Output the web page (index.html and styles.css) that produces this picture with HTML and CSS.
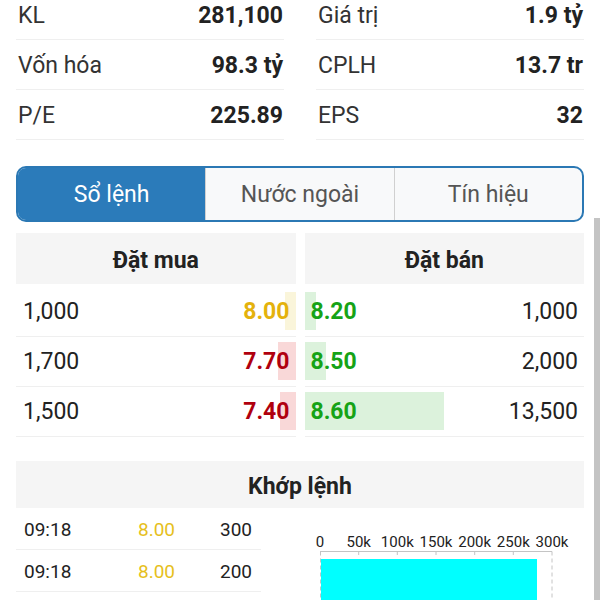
FILE: index.html
```html
<!DOCTYPE html>
<html lang="vi">
<head>
    <meta charset="UTF-8">
    <meta name="viewport" content="width=device-width, initial-scale=1.0">
    <title>Chi tiết cổ phiếu</title>
    <link rel="stylesheet" href="styles.css">
</head>
<body>
    <div class="page">
        <div class="stats">
            <div class="stat-col">
                <div class="stat-row"><span class="label">KL</span><span class="value">281,100</span></div>
                <div class="stat-row"><span class="label">Vốn hóa</span><span class="value">98.3 tỷ</span></div>
                <div class="stat-row"><span class="label">P/E</span><span class="value">225.89</span></div>
            </div>
            <div class="stat-col">
                <div class="stat-row"><span class="label">Giá trị</span><span class="value">1.9 tỷ</span></div>
                <div class="stat-row"><span class="label">CPLH</span><span class="value">13.7 tr</span></div>
                <div class="stat-row"><span class="label">EPS</span><span class="value">32</span></div>
            </div>
        </div>

        <div class="tabs">
            <div class="tab active">Sổ lệnh</div>
            <div class="tab">Nước ngoài</div>
            <div class="tab">Tín hiệu</div>
        </div>

        <div class="orderbook">
            <div class="side buy">
                <div class="side-head">Đặt mua</div>
                <div class="ob-rows">
                    <div class="ob-row">
                        <span class="qty">1,000</span>
                        <span class="price ref"><i class="bar" style="width: 11px"></i>8.00</span>
                    </div>
                    <div class="ob-row">
                        <span class="qty">1,700</span>
                        <span class="price down"><i class="bar" style="width: 18px"></i>7.70</span>
                    </div>
                    <div class="ob-row">
                        <span class="qty">1,500</span>
                        <span class="price down"><i class="bar" style="width: 16px"></i>7.40</span>
                    </div>
                </div>
            </div>
            <div class="side sell">
                <div class="side-head">Đặt bán</div>
                <div class="ob-rows">
                    <div class="ob-row">
                        <i class="bar" style="width: 11px"></i>
                        <span class="price up">8.20</span>
                        <span class="qty">1,000</span>
                    </div>
                    <div class="ob-row">
                        <i class="bar" style="width: 21px"></i>
                        <span class="price up">8.50</span>
                        <span class="qty">2,000</span>
                    </div>
                    <div class="ob-row">
                        <i class="bar" style="width: 139px"></i>
                        <span class="price up">8.60</span>
                        <span class="qty">13,500</span>
                    </div>
                </div>
            </div>
        </div>

        <div class="match">
            <div class="match-head">Khớp lệnh</div>
            <div class="match-body">
                <div class="ticks">
                    <div class="tick-row"><span class="t-time">09:18</span><span class="t-price">8.00</span><span class="t-vol">300</span></div>
                    <div class="tick-row"><span class="t-time">09:18</span><span class="t-price">8.00</span><span class="t-vol">200</span></div>
                </div>
                <svg class="chart" width="323" height="92" viewBox="0 0 323 92">
                    <g class="axis-labels">
                        <text x="59" y="38.5">0</text>
                        <text x="97.7" y="38.5">50k</text>
                        <text x="136.3" y="38.5">100k</text>
                        <text x="175" y="38.5">150k</text>
                        <text x="213.7" y="38.5">200k</text>
                        <text x="252.3" y="38.5">250k</text>
                        <text x="291" y="38.5">300k</text>
                    </g>
                    <line x1="59" y1="43.5" x2="291" y2="43.5" stroke="#c4c4c4" stroke-width="1"/>
                    <g stroke="#c4c4c4" stroke-width="1">
                        <line x1="97.7" y1="43.5" x2="97.7" y2="47"/>
                        <line x1="136.3" y1="43.5" x2="136.3" y2="47"/>
                        <line x1="175" y1="43.5" x2="175" y2="47"/>
                        <line x1="213.7" y1="43.5" x2="213.7" y2="47"/>
                        <line x1="252.3" y1="43.5" x2="252.3" y2="47"/>
                    </g>
                    <g stroke="#c4c4c4" stroke-width="1" stroke-dasharray="4 3">
                        <line x1="59.5" y1="43.5" x2="59.5" y2="92"/>
                        <line x1="291" y1="43.5" x2="291" y2="92"/>
                    </g>
                    <rect x="60" y="51" width="216" height="41" fill="#00ffff"/>
                </svg>
            </div>
        </div>
    </div>
    <div class="scrollbar"></div>
</body>
</html>
```

FILE: styles.css
```css
body {
    margin: 0;
    font-family: Roboto, 'Noto Sans', sans-serif;
    font-variant-numeric: tabular-nums;
    color: #222;
    background: #fff;
    overflow: hidden;
}
.page {
    padding: 0 16px;
    margin-top: -10px;
}
.stats {
    display: grid;
    grid-template-columns: 1fr 1fr;
    column-gap: 32px;
}
.stat-row {
    height: 47px;
    padding: 2px 1px 0 2px;
    border-bottom: 1px solid #efefef;
    display: flex;
    align-items: center;
    justify-content: space-between;
    font-size: 23px;
}
.label {
    color: #333;
}
.value {
    font-weight: bold;
    color: #222;
}
.tabs {
    margin-top: 26px;
    display: flex;
    height: 52px;
    border: 2px solid #2b78b4;
    border-radius: 10px;
    overflow: hidden;
    background: #f8f9fa;
}
.tab {
    flex: 1;
    display: flex;
    align-items: center;
    justify-content: center;
    font-size: 23px;
    color: #555;
    border-left: 1px solid #d0d0d0;
}
.tab:first-child {
    border-left: none;
}
.tab.active {
    background: #2b7bba;
    color: #fff;
}
.orderbook {
    margin-top: 11px;
    display: grid;
    grid-template-columns: 1fr 1fr;
    column-gap: 9px;
}
.side-head {
    height: 48px;
    padding-top: 3px;
    background: #f5f5f5;
    display: flex;
    align-items: center;
    justify-content: center;
    font-size: 23px;
    font-weight: bold;
}
.ob-rows {
    margin-top: 3px;
}
.ob-row {
    position: relative;
    height: 49px;
    border-bottom: 1px solid #efefef;
    display: flex;
    align-items: center;
    justify-content: space-between;
    font-size: 23px;
}
.buy .qty {
    padding-left: 7px;
}
.sell .qty {
    padding-right: 6px;
}
.price {
    font-weight: bold;
}
.buy .price {
    position: relative;
    z-index: 0;
    align-self: stretch;
    display: flex;
    align-items: center;
    padding-right: 6px;
}
.sell .price {
    position: relative;
    padding-left: 6px;
}
.bar {
    position: absolute;
    top: 5px;
    bottom: 6px;
}
.buy .bar {
    right: 0;
    z-index: -1;
}
.sell .bar {
    left: 0;
    background: #dcf2dc;
}
.ref { color: #e4b20c; }
.ref .bar { background: #faf5da; }
.down { color: #b0000e; }
.down .bar { background: #f9d8d8; }
.up { color: #16a316; }
.match {
    margin-top: 24px;
}
.match-head {
    height: 44px;
    padding-top: 3px;
    background: #f5f5f5;
    display: flex;
    align-items: center;
    justify-content: center;
    font-size: 23px;
    font-weight: bold;
}
.match-body {
    display: flex;
}
.ticks {
    width: 245px;
}
.tick-row {
    height: 39px;
    padding-top: 2px;
    border-bottom: 1px solid #efefef;
    display: flex;
    align-items: center;
    font-size: 19px;
    color: #222;
}
.t-time {
    width: 114px;
    padding-left: 8px;
}
.t-price {
    width: 82px;
    color: #e6bf1c;
}
.t-vol {
    width: 40px;
}
.chart {
    display: block;
}
.axis-labels text {
    font-family: Roboto, sans-serif;
    font-size: 15px;
    fill: #222;
    text-anchor: middle;
}
.scrollbar {
    position: fixed;
    right: 0;
    top: 218px;
    width: 6px;
    height: 382px;
    background: #c4c4c4;
}
```
